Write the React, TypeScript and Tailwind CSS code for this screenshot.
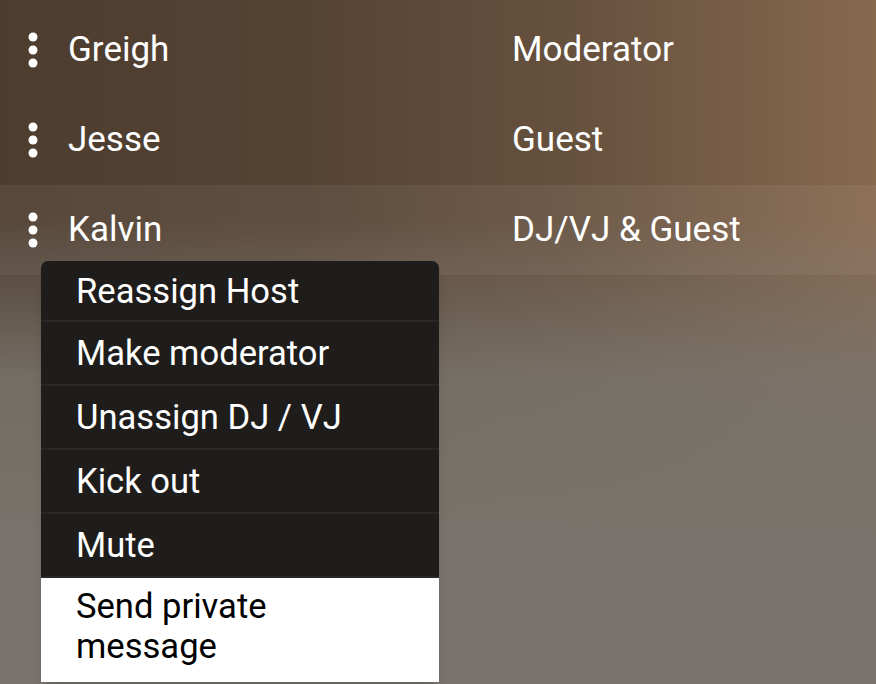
import { useState } from "react";

type Member = {
  name: string;
  role: string;
};

const members: Member[] = [
  { name: "Greigh", role: "Moderator" },
  { name: "Jesse", role: "Guest" },
  { name: "Kalvin", role: "DJ/VJ & Guest" },
];

const actions = ["Reassign Host", "Make moderator", "Unassign DJ / VJ", "Kick out", "Mute"];

function DotsIcon() {
  return (
    <svg width="12" height="40" viewBox="0 0 12 40" className="shrink-0">
      <circle cx="6" cy="7" r="4.5" fill="#fff" />
      <circle cx="6" cy="20" r="4.5" fill="#fff" />
      <circle cx="6" cy="33" r="4.5" fill="#fff" />
    </svg>
  );
}

function ActionMenu() {
  return (
    <div className="absolute left-[41px] top-[76px] z-10 w-[398px] overflow-hidden rounded-t-[7px] bg-[#1f1d1b] shadow-lg">
      {actions.map((label, i) => (
        <div
          key={label}
          className={`flex items-center border-b-2 border-[#2a2826] pl-[35px] text-[34.6px] leading-10 text-white ${
            i === 0 ? "h-[61px]" : "h-16"
          }`}
        >
          {label}
        </div>
      ))}
      <div className="bg-white pt-2 pb-4 pl-[35px] text-[34.6px] leading-10 text-black">
        Send private
        <br />
        message
      </div>
    </div>
  );
}

export default function App() {
  const [open] = useState(2);

  return (
    <div
      className="h-[684px] w-full overflow-hidden pt-[5px] font-['Roboto',sans-serif] text-white bg-[linear-gradient(to_bottom,rgba(122,117,109,0)_32%,rgba(122,117,109,0.85)_55%,#78736c_80%),linear-gradient(to_right,#4d3d2f_0%,#554334_35%,#66513e_65%,#86684f_100%)]"
    >
      {members.map((m, i) => (
        <div
          key={m.name}
          className={`relative flex h-[90px] items-center ${i === open ? "bg-white/[0.06]" : ""}`}
        >
          <div className="flex w-[512px] items-center">
            <div className="ml-[27px] mr-[29px] flex">
              <DotsIcon />
            </div>
            <span className="text-[35px] leading-10">{m.name}</span>
          </div>
          <span className="text-[35px] leading-10">{m.role}</span>
          {i === open && <ActionMenu />}
        </div>
      ))}
    </div>
  );
}
